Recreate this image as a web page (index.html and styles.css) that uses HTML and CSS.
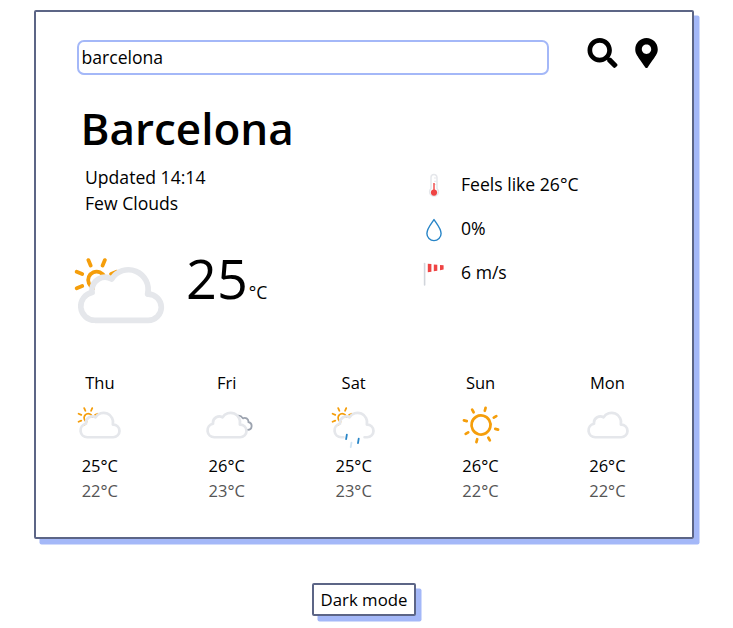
FILE: index.html
```html
<!DOCTYPE html>
<html lang="en">
<head>
<meta charset="utf-8">
<title>Weather</title>
<link rel="stylesheet" href="styles.css">
</head>
<body>
<svg class="defs" aria-hidden="true">
  <defs>
    <path id="cloud" fill="none" stroke="#e5e7eb" stroke-width="3" stroke-linejoin="round" stroke-linecap="round" d="M46.5 31.5h-.32a10.49 10.49 0 00-19.11-8 7 7 0 00-10.57 6 7.21 7.21 0 00.1 1.14A7.5 7.5 0 0018 45.5a4.19 4.19 0 00.5 0h28a7 7 0 000-14z"/>
    <clipPath id="sun-clip"><path d="M12 35l-5.28-4.21-2-6 1-7 4-5 5-3h6l5 1 3 3L33 20l-6 4h-6l-3 3v4l-4 2-2 2z"/></clipPath>
    <clipPath id="back-clip"><path d="M41.8 20.25l4.48 6.61.22 4.64 5.31 2.45 1.69 5.97h8.08L61 27l-9.31-8.5-9.89 1.75z"/></clipPath>
    <g id="small-sun" clip-path="url(#sun-clip)">
      <g transform="rotate(22.5 19 24)" fill="none" stroke="#f59e0b" stroke-width="2" stroke-linecap="round">
        <circle cx="19" cy="24" r="4.5"/>
        <path d="M19 15.67V12.5m0 23v-3.17m5.89-14.22l2.24-2.24M10.87 32.13l2.24-2.24m0-11.78l-2.24-2.24m16.26 16.26l-2.24-2.24M7.5 24h3.17m19.83 0h-3.17"/>
      </g>
    </g>
    <symbol id="partly" viewBox="0 0 64 64"><use href="#small-sun"/><use href="#cloud"/></symbol>
    <symbol id="cloudy" viewBox="0 0 64 64"><use href="#cloud"/></symbol>
    <symbol id="overcast" viewBox="0 0 64 64">
      <path clip-path="url(#back-clip)" fill="none" stroke="#9ca3af" stroke-width="2" stroke-linejoin="round" d="M34.23 33.45a4.05 4.05 0 004.05 4h16.51a4.34 4.34 0 00.81-8.61 3.52 3.52 0 00.06-.66 4.06 4.06 0 00-6.13-3.48 6.08 6.08 0 00-11.25 3.19 6.34 6.34 0 00.18 1.46h-.18a4.05 4.05 0 00-4.05 4.1z"/>
      <use href="#cloud"/>
    </symbol>
    <symbol id="rain" viewBox="0 0 64 64">
      <use href="#small-sun"/>
      <path fill="none" stroke="#e5e7eb" stroke-width="3" stroke-linejoin="round" stroke-linecap="round" d="M43.67 45.5h2.83a7 7 0 000-14h-.32a10.49 10.49 0 00-19.11-8 7 7 0 00-10.57 6 7.21 7.21 0 00.1 1.14A7.5 7.5 0 0018 45.5a4.19 4.19 0 00.5 0h1.83"/>
      <g fill="none" stroke="#2885c7" stroke-width="2" stroke-linecap="round">
        <path d="M24.1 42.6l-.8 4.9M37.2 47l-.8 4.9"/><path opacity=".22" d="M29.2 51.4l-.8 4.9"/>
      </g>
    </symbol>
    <symbol id="sunny" viewBox="0 0 64 64">
      <g transform="rotate(15 32 32)" fill="none" stroke="#f59e0b" stroke-width="3" stroke-linecap="round">
        <circle cx="32" cy="32" r="10.5"/>
        <path d="M32 15.71V12.5m0 39v-3.21m11.52-27.81l2.27-2.27M18.21 45.79l2.27-2.27m0-23.04l-2.27-2.27m27.58 27.58l-2.27-2.27M15.71 32H12.5m39 0h-3.21"/>
      </g>
    </symbol>
  </defs>
</svg>
<main class="card">
  <form class="search">
    <input class="search-input" type="text" value="barcelona" aria-label="City">
    <button class="icon-button" type="button" aria-label="Search"><svg class="icon-search" viewBox="0 0 512 512"><path d="M505 442.7L405.3 343c-4.5-4.5-10.6-7-17-7H372c27.6-35.3 44-79.7 44-128C416 93.1 322.9 0 208 0S0 93.1 0 208s93.1 208 208 208c48.3 0 92.7-16.4 128-44v16.3c0 6.4 2.5 12.5 7 17l99.7 99.7c9.4 9.4 24.6 9.4 33.9 0l28.3-28.3c9.4-9.4 9.4-24.6.1-34zM208 336c-70.7 0-128-57.2-128-128 0-70.7 57.2-128 128-128 70.7 0 128 57.2 128 128 0 70.7-57.2 128-128 128z"/></svg></button>
    <button class="icon-button" type="button" aria-label="Use my location"><svg class="icon-pin" viewBox="0 0 384 512"><path d="M172.268 501.67C26.97 291.031 0 269.413 0 192 0 85.961 85.961 0 192 0s192 85.961 192 192c0 77.413-26.97 99.031-172.268 309.67-9.535 13.774-29.93 13.773-39.464 0zM192 272c44.183 0 80-35.817 80-80s-35.817-80-80-80-80 35.817-80 80 35.817 80 80 80z"/></svg></button>
  </form>
  <h1 class="city">Barcelona</h1>
  <section class="current">
    <div class="summary">
      <p class="line">Updated 14:14</p>
      <p class="line">Few Clouds</p>
      <div class="now">
        <svg class="now-icon"><use href="#partly"/></svg>
        <div class="temp"><span class="degrees">25</span><span class="unit">°C</span></div>
      </div>
    </div>
    <ul class="details">
      <li class="detail">
        <svg class="detail-icon" viewBox="0 0 44 44" fill="none">
          <path d="M19 25.5V14.5a3 3 0 016 0v11a4.4 4.4 0 11-6 0z" stroke="#e5e7eb" stroke-width="1.5"/>
          <path d="M22 15h2.5M22 18.3h2.5M22 21.6h2.5" stroke="#e5e7eb"/>
          <path d="M22 20v9" stroke="#ef4444" stroke-width="1.4"/><circle cx="22" cy="29.6" r="3.1" fill="#ef4444"/>
        </svg><span>Feels like 26°C</span></li>
      <li class="detail">
        <svg class="detail-icon" viewBox="0 0 44 44" fill="none"><path d="M22 12.6C19.5 16.4 14.9 21.5 14.9 26.5a7.1 7.1 0 0014.2 0C29.1 21.5 24.5 16.4 22 12.6z" stroke="#2885c7" stroke-width="1.4" stroke-linejoin="round"/></svg><span>0%</span></li>
      <li class="detail">
        <svg class="detail-icon" viewBox="0 0 44 44" fill="none"><path d="M12.6 12.5v21.5" stroke="#d1d5db" stroke-width="1.6" stroke-linecap="round"/><path d="M15.8 12.7l3.6.4v7.7l-3.6.5zM21.8 13.4l3.5.3v6l-3.5.5zM28 13.9l3.6.4v4.3l-3.6.6z" fill="#ef4444"/></svg><span>6 m/s</span></li>
    </ul>
  </section>
  <section class="forecast">
    <div class="day"><span>Thu</span><svg class="day-icon"><use href="#partly"/></svg><span>25°C</span><span class="low">22°C</span></div>
    <div class="day"><span>Fri</span><svg class="day-icon"><use href="#overcast"/></svg><span>26°C</span><span class="low">23°C</span></div>
    <div class="day"><span>Sat</span><svg class="day-icon"><use href="#rain"/></svg><span>25°C</span><span class="low">23°C</span></div>
    <div class="day"><span>Sun</span><svg class="day-icon"><use href="#sunny"/></svg><span>26°C</span><span class="low">22°C</span></div>
    <div class="day"><span>Mon</span><svg class="day-icon"><use href="#cloudy"/></svg><span>26°C</span><span class="low">22°C</span></div>
  </section>
</main>
<button class="mode" type="button">Dark mode</button>
</body>
</html>
```
FILE: styles.css
```css
* { box-sizing: border-box; }
body {
  margin: 0;
  min-height: 100vh;
  padding-top: 10px;
  display: flex;
  flex-direction: column;
  align-items: center;
  background: #fff;
  color: #000;
  font: 400 17.6px/26px "Open Sans", sans-serif;
}
h1, p, ul { margin: 0; padding: 0; }
.defs { position: absolute; width: 0; height: 0; }
.card {
  width: 660px;
  height: 529px;
  margin-right: 5px;
  padding: 24px 0 0 41px;
  border: 2px solid #5c6586;
  border-radius: 2px;
  box-shadow: 5.5px 5.5px 0 #a4b8f8;
}
.search { display: flex; align-items: flex-start; }
.search-input {
  flex: none;
  width: 472px;
  height: 35px;
  margin: 4px 38px 0 0;
  padding: 0 3px 2px 2.5px;
  border: 2px solid #a4b8f8;
  border-radius: 7px;
  outline: 0;
  color: #000;
  font: inherit;
}
.icon-button { margin: 2px 17px 0 0; padding: 0; border: 0; background: none; color: #000; }
.icon-button svg { display: block; fill: currentColor; }
.icon-search { width: 31px; height: 30px; }
.icon-pin { width: 23px; height: 30px; }
.city { margin: 22px 0 0 3.5px; font-size: 44px; font-weight: 600; line-height: 62px; }
.current { display: flex; margin-top: 5px; height: 206px; }
.summary { width: 335px; }
.line { margin-left: 8px; }
.now { display: flex; margin: 18.5px 0 0 -16.5px; }
.now-icon { width: 120px; height: 120px; flex: none; }
.temp { margin: 6.5px 0 0 5.5px; line-height: 74px; }
.degrees { font-size: 54px; }
.unit { margin-left: 1px; }
.details { margin-top: -1px; list-style: none; }
.detail { display: flex; align-items: center; gap: 5px; height: 44px; }
.detail span { margin-top: -2px; }
.detail-icon { width: 44px; height: 44px; }
.forecast { display: flex; margin-left: -40.6px; font-size: 16.5px; line-height: 25px; }
.day { flex: none; display: flex; flex-direction: column; align-items: center; width: 126.9px; }
.day-icon { width: 58px; height: 58px; margin: 1.4px 0 -1.4px .6px; }
.low { color: #555; }
.mode {
  margin: 44px 5px 0 0;
  width: 104px;
  height: 33px;
  padding: 0;
  border: 2px solid #5c6586;
  border-radius: 2px;
  background: #fff;
  box-shadow: 5.5px 5.5px 0 #a4b8f8;
  color: #000;
  font: inherit;
  font-size: 16.8px;
}
```
